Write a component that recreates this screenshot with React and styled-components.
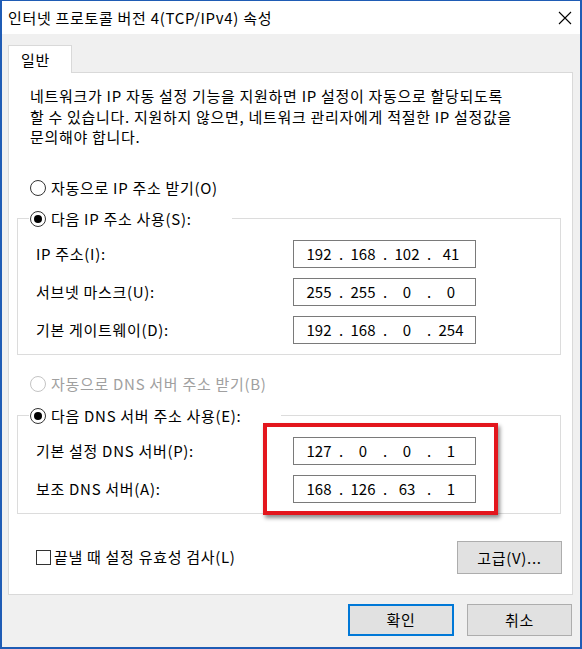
import React from 'react';
import styled, { createGlobalStyle, css } from 'styled-components';

const COLORS = {
  frame: '#1f5cb5',
  face: '#f0f0f0',
  panelBorder: '#d9d9d9',
  groupBorder: '#dcdcdc',
  fieldBorder: '#7a7a7a',
  text: '#000000',
  disabled: '#a0a0a0',
  button: '#e1e1e1',
  buttonBorder: '#adadad',
  focus: '#0078d7',
  mark: '#e3161d'
};

const FONT = `"Noto Sans CJK KR", "Noto Sans", sans-serif`;

const GlobalStyle = createGlobalStyle`
  * { box-sizing: border-box; }
  body {
    margin: 0;
    background: #ffffff;
    font-family: ${FONT};
    font-size: 15px;
    letter-spacing: 0.7px;
    color: ${COLORS.text};
  }
`;

const Window = styled.div`
  width: 582px;
  height: 649px;
  display: flex;
  flex-direction: column;
  background: ${COLORS.face};
  border: 2px solid ${COLORS.frame};
  border-top-width: 1px;
`;

const TitleBar = styled.div`
  height: 33px;
  flex: none;
  display: flex;
  align-items: center;
  justify-content: space-between;
  padding-left: 6px;
  background: #ffffff;
  font-size: 15px;
  line-height: 20px;
  white-space: nowrap;
`;

const CloseButton = styled.div`
  width: 30px;
  height: 33px;
  display: flex;
  align-items: center;
  justify-content: center;
`;

const Body = styled.div`
  flex: 1;
  display: flex;
  flex-direction: column;
  padding: 11px 7px 0 6px;
`;

const TabStrip = styled.div`
  display: flex;
  position: relative;
  z-index: 1;
  margin-bottom: -1px;
`;

const Tab = styled.div`
  width: 64px;
  height: 28px;
  padding-left: 12px;
  display: flex;
  align-items: center;
  background: #ffffff;
  border: 1px solid ${COLORS.panelBorder};
  border-bottom: none;
  line-height: 20px;
`;

const Panel = styled.div`
  background: #ffffff;
  border: 1px solid ${COLORS.panelBorder};
  padding: 13px 0 20px 0;
  display: flex;
  flex-direction: column;
`;

const Description = styled.p`
  margin: 0;
  padding-left: 21px;
  line-height: 20.5px;
  white-space: nowrap;
`;

const RadioRow = styled.label`
  display: flex;
  align-items: center;
  gap: 5px;
  height: 20px;
  line-height: 20px;
  white-space: nowrap;
  color: ${(p) => (p.$disabled ? COLORS.disabled : COLORS.text)};
  ${(p) => p.$indent && css`padding-left: 21px;`}
  margin-top: ${(p) => p.$top || 0}px;
`;

const RadioDot = styled.span`
  width: 16px;
  height: 16px;
  flex: none;
  border-radius: 50%;
  border: 1px solid ${(p) => (p.$disabled ? '#c4c4c4' : '#333333')};
  background: #ffffff;
  display: flex;
  align-items: center;
  justify-content: center;

  &::after {
    content: '';
    width: 8px;
    height: 8px;
    border-radius: 50%;
    background: #000000;
    display: ${(p) => (p.$checked ? 'block' : 'none')};
  }
`;

const Group = styled.fieldset`
  margin: ${(p) => p.$top || 0}px 11px 0 8px;
  padding: 0;
  border: 1px solid ${COLORS.groupBorder};
  min-width: 0;
`;

const Legend = styled.legend`
  margin-left: 11px;
  padding: 0 40px 0 1px;
`;

const Rows = styled.div`
  position: relative;
  display: grid;
  grid-template-columns: 1fr 183px;
  align-items: center;
  row-gap: 10px;
  padding: 11px 84px 10px 18px;
`;

const FieldLabel = styled.span`
  white-space: nowrap;
  line-height: 20px;
`;

const IpBox = styled.div`
  height: 28px;
  display: flex;
  align-items: center;
  padding-left: 7px;
  border: 1px solid ${COLORS.fieldBorder};
  background: #ffffff;
  font-size: 15px;
  letter-spacing: 0;
`;

const Octet = styled.span`
  width: 36px;
  text-align: center;
`;

const Dot = styled.span`
  width: 8px;
  text-align: center;
`;

const Highlight = styled.div`
  position: absolute;
  left: 245px;
  top: -3px;
  width: 235px;
  height: 92px;
  border: 4px solid ${COLORS.mark};
  box-shadow: 2px 3px 4px rgba(0, 0, 0, 0.45);
  pointer-events: none;
`;

const BottomRow = styled.div`
  display: flex;
  align-items: center;
  justify-content: space-between;
  margin-top: 27px;
  padding: 0 10px 0 27px;
`;

const CheckRow = styled.label`
  display: flex;
  align-items: center;
  gap: 3px;
  white-space: nowrap;
  line-height: 20px;
`;

const CheckBox = styled.span`
  width: 15px;
  height: 15px;
  border: 1px solid #333333;
  background: #ffffff;
`;

const Button = styled.button`
  width: ${(p) => p.$width || 106}px;
  height: ${(p) => p.$height || 32}px;
  font-family: ${FONT};
  font-size: 15px;
  letter-spacing: 0.7px;
  color: ${COLORS.text};
  background: ${COLORS.button};
  border: 1px solid ${COLORS.buttonBorder};
  padding: 0;
  ${(p) =>
    p.$default &&
    css`
      border: 2px solid ${COLORS.focus};
    `}
`;

const Footer = styled.div`
  display: flex;
  justify-content: flex-end;
  gap: 13px;
  padding: 9px 1px 0 0;
`;

const IpField = ({ octets }) => (
  <IpBox>
    {octets.map((o, i) => (
      <React.Fragment key={i}>
        {i > 0 && <Dot>.</Dot>}
        <Octet>{o}</Octet>
      </React.Fragment>
    ))}
  </IpBox>
);

const Radio = ({ checked, disabled, children, ...rest }) => (
  <RadioRow $disabled={disabled} {...rest}>
    <RadioDot $checked={checked} $disabled={disabled} />
    {children}
  </RadioRow>
);

export default function App() {
  return (
    <>
      <GlobalStyle />
      <Window>
        <TitleBar>
          <span>인터넷 프로토콜 버전 4(TCP/IPv4) 속성</span>
          <CloseButton>
            <svg width="14" height="14" viewBox="0 0 14 14">
              <path d="M1 1 L13 13 M13 1 L1 13" stroke="#000" strokeWidth="1.1" fill="none" />
            </svg>
          </CloseButton>
        </TitleBar>
        <Body>
          <TabStrip>
            <Tab>일반</Tab>
          </TabStrip>
          <Panel>
            <Description>
              네트워크가 IP 자동 설정 기능을 지원하면 IP 설정이 자동으로 할당되도록
              <br />
              할 수 있습니다. 지원하지 않으면, 네트워크 관리자에게 적절한 IP 설정값을
              <br />
              문의해야 합니다.
            </Description>

            <Radio $indent $top={30}>자동으로 IP 주소 받기(O)</Radio>

            <Group $top={11}>
              <Legend>
                <Radio checked>다음 IP 주소 사용(S):</Radio>
              </Legend>
              <Rows>
                <FieldLabel>IP 주소(I):</FieldLabel>
                <IpField octets={['192', '168', '102', '41']} />
                <FieldLabel>서브넷 마스크(U):</FieldLabel>
                <IpField octets={['255', '255', '0', '0']} />
                <FieldLabel>기본 게이트웨이(D):</FieldLabel>
                <IpField octets={['192', '168', '0', '254']} />
              </Rows>
            </Group>

            <Radio $indent disabled $top={19}>자동으로 DNS 서버 주소 받기(B)</Radio>

            <Group $top={12}>
              <Legend>
                <Radio checked>다음 DNS 서버 주소 사용(E):</Radio>
              </Legend>
              <Rows>
                <FieldLabel>기본 설정 DNS 서버(P):</FieldLabel>
                <IpField octets={['127', '0', '0', '1']} />
                <FieldLabel>보조 DNS 서버(A):</FieldLabel>
                <IpField octets={['168', '126', '63', '1']} />
                <Highlight />
              </Rows>
            </Group>

            <BottomRow>
              <CheckRow>
                <CheckBox />
                끝낼 때 설정 유효성 검사(L)
              </CheckRow>
              <Button $width={105} $height={33}>고급(V)...</Button>
            </BottomRow>
          </Panel>
          <Footer>
            <Button $default>확인</Button>
            <Button $width={105}>취소</Button>
          </Footer>
        </Body>
      </Window>
    </>
  );
}
